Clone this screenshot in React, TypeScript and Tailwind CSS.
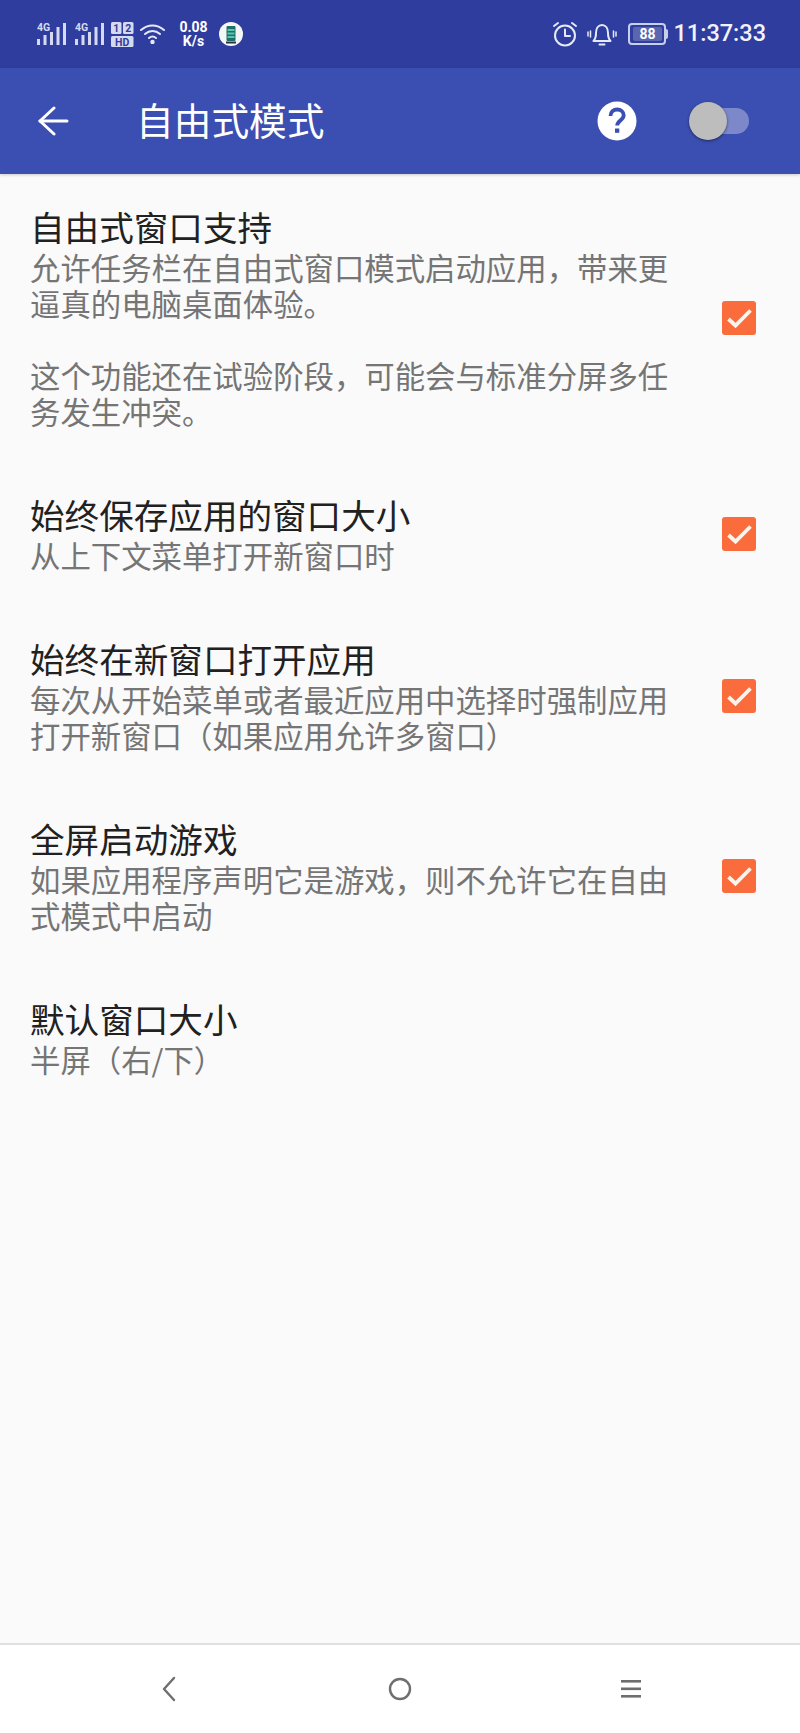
const font = '[font-family:"Noto_Sans_CJK_SC","Roboto",sans-serif]';

const rows = [
  {
    title: "自由式窗口支持",
    lines: ["允许任务栏在自由式窗口模式启动应用，带来更", "逼真的电脑桌面体验。", "", "这个功能还在试验阶段，可能会与标准分屏多任", "务发生冲突。"],
    checked: true,
  },
  { title: "始终保存应用的窗口大小", lines: ["从上下文菜单打开新窗口时"], checked: true },
  {
    title: "始终在新窗口打开应用",
    lines: ["每次从开始菜单或者最近应用中选择时强制应用", "打开新窗口（如果应用允许多窗口）"],
    checked: true,
  },
  {
    title: "全屏启动游戏",
    lines: ["如果应用程序声明它是游戏，则不允许它在自由", "式模式中启动"],
    checked: true,
  },
  { title: "默认窗口大小", lines: ["半屏（右/下）"], checked: false },
];

function Signal() {
  return (
    <svg width="29" height="24" viewBox="0 0 29 24" fill="#d5daf0">
      <text x="0" y="8.500" fontSize="10.500" fontWeight="700" fontFamily="Roboto, sans-serif">4G</text>
      <rect x="0" y="17" width="3" height="6" />
      <rect x="6.500" y="13" width="3" height="10" />
      <rect x="13" y="10" width="3" height="13" />
      <rect x="19.500" y="5" width="3" height="18" />
      <rect x="26" y="1" width="3" height="22" />
    </svg>
  );
}

function StatusBar() {
  return (
    <div className="flex h-[68px] items-center justify-between bg-[#2f3e9e] pl-[37px] pr-[34px] text-white">
      <div className="flex items-center">
        <Signal />
        <div className="ml-[9px]"><Signal /></div>
        <svg className="ml-[7px]" width="23" height="25" viewBox="0 0 23 25">
          <rect x="0" y="0" width="10.500" height="12" rx="1.500" fill="#d5daf0" />
          <rect x="12" y="0" width="10.500" height="12" rx="1.500" fill="#d5daf0" />
          <rect x="0" y="14" width="22.500" height="11" rx="1.500" fill="#d5daf0" />
          <text x="5.200" y="10.300" fontSize="10.500" fontWeight="700" textAnchor="middle" fontFamily="Roboto, sans-serif" fill="#2f3e9e">1</text>
          <text x="17.200" y="10.300" fontSize="10.500" fontWeight="700" textAnchor="middle" fontFamily="Roboto, sans-serif" fill="#2f3e9e">2</text>
          <text x="11.200" y="23.500" fontSize="10.500" fontWeight="700" textAnchor="middle" fontFamily="Roboto, sans-serif" fill="#2f3e9e">HD</text>
        </svg>
        <svg className="ml-[6px]" width="25" height="20" viewBox="0 0 25 20" fill="none" stroke="#e6e9f6" strokeWidth="2" strokeLinecap="round">
          <path d="M1 6c7-6 16-6 23 0" />
          <path d="M5 10c4.500-4 10.500-4 15 0" />
          <path d="M9 14c2.200-1.800 4.800-1.800 7 0" />
          <circle cx="12.500" cy="18" r="1.200" fill="#e6e9f6" />
        </svg>
        <div className="ml-[14px] flex w-[29px] flex-col items-center text-[14px] font-bold leading-[14px] [font-family:Roboto,sans-serif]">
          <span>0.08</span>
          <span>K/s</span>
        </div>
        <svg className="ml-[11px]" width="24" height="24" viewBox="0 0 24 24">
          <circle cx="12" cy="12" r="12" fill="#f4f7f6" />
          <rect x="7.500" y="4" width="9" height="15" rx="1" fill="#1f6e6a" />
          <rect x="8.500" y="7" width="7" height="2" fill="#58c7b0" />
          <rect x="8.500" y="10.500" width="7" height="2" fill="#58c7b0" />
          <rect x="8.500" y="14" width="7" height="2" fill="#58c7b0" />
          <rect x="7" y="19.500" width="10" height="2" fill="#28323c" />
        </svg>
      </div>
      <div className="flex items-center">
        <svg width="26" height="26" viewBox="0 0 26 26" fill="none" stroke="#e6e9f6" strokeWidth="2" strokeLinecap="round" strokeLinejoin="round">
          <circle cx="13" cy="14.500" r="10" />
          <path d="M13 8.500v6.500h5" />
          <path d="M2 5l4-3M24 5l-4-3" />
        </svg>
        <svg className="ml-[9px]" width="30" height="26" viewBox="0 0 30 26" fill="none" stroke="#e6e9f6" strokeWidth="2" strokeLinecap="round" strokeLinejoin="round">
          <path d="M6.500 20c2-2 2.500-4 2.500-8 0-5 2.500-8 6-8s6 3 6 8c0 4 .500 6 2.500 8z" />
          <path d="M12.500 23.500h5" />
          <path d="M1 11v4M3.500 10v6M29 11v4M26.500 10v6" strokeWidth="1.500" />
        </svg>
        <div className="ml-[11px] flex h-[22px] w-[38px] items-center justify-center rounded-[4px] border-2 border-[#c8cfec]">
          <div className="flex h-[14px] w-[29px] items-center justify-center rounded-[2px] bg-[#5a67ae] text-[14px] font-bold text-white [font-family:Roboto,sans-serif]">88</div>
        </div>
        <div className="h-[10px] w-[2px] rounded-r-sm bg-[#c8cfec]" />
        <span className="ml-[5px] text-[23.5px] font-medium leading-none text-[#f2f3fa] [font-family:Roboto,sans-serif]">11:37:33</span>
      </div>
    </div>
  );
}

function Toolbar() {
  return (
    <div className="flex h-[106px] items-center bg-[#3b4fb2] shadow-[0_1px_3px_rgba(0,0,0,0.2)]">
      <svg className="ml-[37px]" width="32" height="30" viewBox="0 0 32 30" fill="none" stroke="white" strokeWidth="3" strokeLinecap="round" strokeLinejoin="round">
        <path d="M30 15H3" />
        <path d="M17 2L3 15l14 13" />
      </svg>
      <span className={`ml-[67px] pb-[4px] text-[37.7px] leading-none text-white ${font}`}>自由式模式</span>
      <div className="ml-auto flex items-center">
        <svg width="40" height="40" viewBox="0 0 40 40">
          <circle cx="20" cy="20" r="19.500" fill="white" />
          <path d="M13.500 15c0-4 3-6.500 6.700-6.500s6.500 2.300 6.500 5.800c0 5-6.500 5.500-6.500 10.200" fill="none" stroke="#3b4fb2" strokeWidth="3.800" />
          <rect x="18" y="27.500" width="4.300" height="4.300" fill="#3b4fb2" />
        </svg>
        <div className="relative ml-[58px] mr-[51px] h-[26px] w-[54px] rounded-full bg-[#7c88c9]">
          <div className="absolute left-[-6px] top-[-6px] h-[38px] w-[38px] rounded-full bg-[#bdbdbd] shadow-[0_1px_3px_rgba(0,0,0,0.5)]" />
        </div>
      </div>
    </div>
  );
}

function Checkbox() {
  return (
    <svg width="34" height="34" viewBox="0 0 34 34" className="mt-[3px] shrink-0">
      <rect width="34" height="34" rx="3" fill="#fa6c3c" />
      <path d="M6.500 18l7 6.500L28.500 9.500" fill="none" stroke="#fdf3ea" strokeWidth="3.800" />
    </svg>
  );
}

export default function App() {
  return (
    <div className={`flex h-[1733px] w-[800px] flex-col bg-[#fafafa] ${font}`}>
      <StatusBar />
      <Toolbar />
      <div className="flex flex-1 flex-col gap-[62px] pt-[29px]">
        {rows.map((row, i) => (
          <div key={i} className="flex items-center pl-[30px] pr-[44px]">
            <div className="flex-1">
              <div className="text-[34.6px] leading-[46px] text-[#212121]">{row.title}</div>
              {row.lines.map((line, j) => (
                <div key={j} className="h-[36px] whitespace-nowrap text-[30.4px] leading-[36px] text-[#757575]">{line}</div>
              ))}
            </div>
            {row.checked && <Checkbox />}
          </div>
        ))}
      </div>
      <div className="flex h-[90px] items-center border-t-2 border-[#e0e0e0] bg-white">
        <svg className="ml-[160px]" width="18" height="26" viewBox="0 0 18 26" fill="none" stroke="#6e6e6e" strokeWidth="2.400" strokeLinecap="round" strokeLinejoin="round">
          <path d="M14 2L4 13l10 11" />
        </svg>
        <svg className="ml-[210px]" width="24" height="24" viewBox="0 0 24 24" fill="none" stroke="#6e6e6e" strokeWidth="2.400">
          <circle cx="12" cy="12" r="10" />
        </svg>
        <svg className="ml-[208px]" width="22" height="22" viewBox="0 0 22 22" fill="#6e6e6e">
          <rect x="1" y="2" width="20" height="2.600" />
          <rect x="1" y="9.500" width="20" height="2.600" />
          <rect x="1" y="17" width="20" height="2.600" />
        </svg>
      </div>
    </div>
  );
}
